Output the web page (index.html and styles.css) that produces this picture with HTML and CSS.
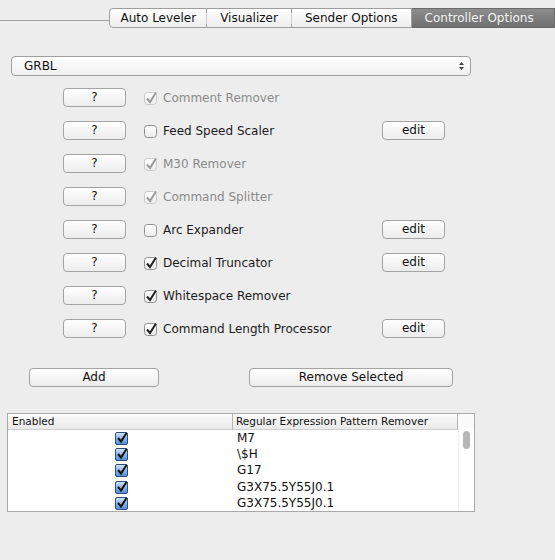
FILE: index.html
```html
<!DOCTYPE html>
<html>
<head>
<meta charset="utf-8">
<link rel="stylesheet" href="styles.css">
</head>
<body>
<svg class="defs" width="0" height="0" aria-hidden="true">
  <defs>
    <linearGradient id="blueFill" x1="0" y1="0" x2="0" y2="1">
      <stop offset="0" stop-color="#d6e6fb"/>
      <stop offset="0.5" stop-color="#8db6ea"/>
      <stop offset="1" stop-color="#4f89d6"/>
    </linearGradient>
    <linearGradient id="boxFill" x1="0" y1="0" x2="0" y2="1">
      <stop offset="0" stop-color="#ffffff"/>
      <stop offset="1" stop-color="#ececec"/>
    </linearGradient>
  </defs>
</svg>

<div class="tabs">
  <div class="tabline"></div>
  <div class="tab first">Auto Leveler</div>
  <div class="tab">Visualizer</div>
  <div class="tab">Sender Options</div>
  <div class="tab selected">Controller Options</div>
</div>

<div class="combo">
  <span>GRBL</span>
  <svg class="arrows" width="7" height="10" viewBox="0 0 7 10"><path d="M3.5 1 L6 4 L1 4 Z M3.5 9 L6 6 L1 6 Z" fill="#444"/></svg>
</div>

<div class="rows">
  <div class="row">
    <div class="btn q">?</div>
    <svg class="cb" width="14" height="14" viewBox="0 0 14 14"><rect x="0.5" y="1.5" width="12" height="12" rx="3" fill="url(#boxFill)" stroke="#c9c9c9"/><path d="M3 7.5 L6 11 L12 1.5" fill="none" stroke="#9a9a9a" stroke-width="2"/></svg>
    <span class="label disabled">Comment Remover</span>
  </div>
  <div class="row">
    <div class="btn q">?</div>
    <svg class="cb" width="14" height="14" viewBox="0 0 14 14"><rect x="0.5" y="1.5" width="12" height="12" rx="3" fill="url(#boxFill)" stroke="#8f8f8f"/></svg>
    <span class="label">Feed Speed Scaler</span>
    <div class="btn edit">edit</div>
  </div>
  <div class="row">
    <div class="btn q">?</div>
    <svg class="cb" width="14" height="14" viewBox="0 0 14 14"><rect x="0.5" y="1.5" width="12" height="12" rx="3" fill="url(#boxFill)" stroke="#c9c9c9"/><path d="M3 7.5 L6 11 L12 1.5" fill="none" stroke="#9a9a9a" stroke-width="2"/></svg>
    <span class="label disabled">M30 Remover</span>
  </div>
  <div class="row">
    <div class="btn q">?</div>
    <svg class="cb" width="14" height="14" viewBox="0 0 14 14"><rect x="0.5" y="1.5" width="12" height="12" rx="3" fill="url(#boxFill)" stroke="#c9c9c9"/><path d="M3 7.5 L6 11 L12 1.5" fill="none" stroke="#9a9a9a" stroke-width="2"/></svg>
    <span class="label disabled">Command Splitter</span>
  </div>
  <div class="row">
    <div class="btn q">?</div>
    <svg class="cb" width="14" height="14" viewBox="0 0 14 14"><rect x="0.5" y="1.5" width="12" height="12" rx="3" fill="url(#boxFill)" stroke="#8f8f8f"/></svg>
    <span class="label">Arc Expander</span>
    <div class="btn edit">edit</div>
  </div>
  <div class="row">
    <div class="btn q">?</div>
    <svg class="cb" width="14" height="14" viewBox="0 0 14 14"><rect x="0.5" y="1.5" width="12" height="12" rx="3" fill="url(#boxFill)" stroke="#8f8f8f"/><path d="M3 7.5 L6 11 L12 1.5" fill="none" stroke="#222" stroke-width="2"/></svg>
    <span class="label">Decimal Truncator</span>
    <div class="btn edit">edit</div>
  </div>
  <div class="row">
    <div class="btn q">?</div>
    <svg class="cb" width="14" height="14" viewBox="0 0 14 14"><rect x="0.5" y="1.5" width="12" height="12" rx="3" fill="url(#boxFill)" stroke="#8f8f8f"/><path d="M3 7.5 L6 11 L12 1.5" fill="none" stroke="#222" stroke-width="2"/></svg>
    <span class="label">Whitespace Remover</span>
  </div>
  <div class="row">
    <div class="btn q">?</div>
    <svg class="cb" width="14" height="14" viewBox="0 0 14 14"><rect x="0.5" y="1.5" width="12" height="12" rx="3" fill="url(#boxFill)" stroke="#8f8f8f"/><path d="M3 7.5 L6 11 L12 1.5" fill="none" stroke="#222" stroke-width="2"/></svg>
    <span class="label">Command Length Processor</span>
    <div class="btn edit">edit</div>
  </div>
</div>

<div class="actions">
  <div class="btn add">Add</div>
  <div class="btn remove">Remove Selected</div>
</div>

<div class="table">
  <div class="thead">
    <div class="th th1">Enabled</div>
    <div class="th th2">Regular Expression Pattern Remover</div>
    <div class="th th3"></div>
  </div>
  <div class="tbody">
    <div class="trows">
      <div class="tr"><div class="td c1"><svg width="14" height="14" viewBox="0 0 14 14"><rect x="0.5" y="1.5" width="12" height="12" rx="1.5" fill="url(#blueFill)" stroke="#2d4f80"/><path d="M3 7 L6 10.5 L11.5 2" fill="none" stroke="#111" stroke-width="2"/></svg></div><div class="td c2">M7</div></div>
      <div class="tr"><div class="td c1"><svg width="14" height="14" viewBox="0 0 14 14"><rect x="0.5" y="1.5" width="12" height="12" rx="1.5" fill="url(#blueFill)" stroke="#2d4f80"/><path d="M3 7 L6 10.5 L11.5 2" fill="none" stroke="#111" stroke-width="2"/></svg></div><div class="td c2">\$H</div></div>
      <div class="tr"><div class="td c1"><svg width="14" height="14" viewBox="0 0 14 14"><rect x="0.5" y="1.5" width="12" height="12" rx="1.5" fill="url(#blueFill)" stroke="#2d4f80"/><path d="M3 7 L6 10.5 L11.5 2" fill="none" stroke="#111" stroke-width="2"/></svg></div><div class="td c2">G17</div></div>
      <div class="tr"><div class="td c1"><svg width="14" height="14" viewBox="0 0 14 14"><rect x="0.5" y="1.5" width="12" height="12" rx="1.5" fill="url(#blueFill)" stroke="#2d4f80"/><path d="M3 7 L6 10.5 L11.5 2" fill="none" stroke="#111" stroke-width="2"/></svg></div><div class="td c2">G3X75.5Y55J0.1</div></div>
      <div class="tr"><div class="td c1"><svg width="14" height="14" viewBox="0 0 14 14"><rect x="0.5" y="1.5" width="12" height="12" rx="1.5" fill="url(#blueFill)" stroke="#2d4f80"/><path d="M3 7 L6 10.5 L11.5 2" fill="none" stroke="#111" stroke-width="2"/></svg></div><div class="td c2">G3X75.5Y55J0.1</div></div>
    </div>
    <div class="scroll"><div class="thumb"></div></div>
  </div>
</div>
</body>
</html>
```

FILE: styles.css
```css
* { box-sizing: border-box; }

html, body {
  margin: 0;
  padding: 0;
}

body {
  width: 555px;
  height: 560px;
  background: #ededed;
  font-family: "DejaVu Sans", "Liberation Sans", sans-serif;
  font-size: 12px;
  color: #1c1c1c;
  overflow: hidden;
}

.defs { position: absolute; }

/* Tabs */
.tabs {
  display: flex;
  padding-top: 8px;
  height: 28px;
}

.tabline {
  width: 110px;
  height: 1px;
  margin-top: 12px;
  background: #a4a4a4;
}

.tab {
  position: relative;
  height: 20px;
  line-height: 18px;
  padding: 0 13px;
  border: 1px solid #9e9e9e;
  border-left: none;
  background: linear-gradient(#ffffff, #eeeeee);
  color: #111;
  white-space: nowrap;
}

.tab::before {
  content: "";
  position: absolute;
  left: -1px;
  top: 4px;
  height: 11px;
  width: 1px;
  background: #cfcfcf;
}

.tab.first {
  border-left: 1px solid #9e9e9e;
  border-radius: 4px 0 0 4px;
  padding: 0 10px;
}

.tab.first::before { display: none; }

.tab.selected {
  background: linear-gradient(#8d8d8d, #6f6f6f);
  color: #f2f2f2;
  border-color: #6a6a6a;
  padding: 0 15px 0 13px;
  width: 144px;
}

.tab.selected::before { display: none; }

/* Combo */
.combo {
  margin: 28px 0 0 11px;
  width: 460px;
  height: 20px;
  border: 1px solid #a0a0a0;
  border-radius: 4px;
  background: linear-gradient(#ffffff, #f0f0f0);
  display: flex;
  align-items: center;
  justify-content: space-between;
  padding: 0 5px 0 12px;
  color: #111;
}

/* Filter rows */
.rows {
  margin-top: 5px;
  padding-left: 63px;
}

.row {
  height: 33px;
  display: flex;
  align-items: center;
}

.btn {
  height: 19px;
  border: 1px solid #a3a3a3;
  border-radius: 4px;
  background: linear-gradient(#ffffff, #ececec);
  text-align: center;
  line-height: 17px;
  color: #111;
}

.btn.q { width: 63px; }

.cb {
  margin-left: 18px;
  flex: none;
}

.label {
  margin-left: 5px;
  width: 219px;
  white-space: nowrap;
}

.label.disabled { color: #8a8a8a; }

.btn.edit { width: 63px; }

/* Add / Remove */
.actions {
  display: flex;
  margin-top: 23px;
  padding-left: 29px;
}

.btn.add { width: 130px; }

.btn.remove {
  width: 204px;
  margin-left: 90px;
}

/* Table */
.table {
  margin: 26px 0 0 7px;
  width: 468px;
  height: 99px;
  border: 1px solid #a9a9a9;
  background: #ffffff;
}

.thead {
  display: flex;
  height: 16px;
  font-size: 10.5px;
  color: #111;
}

.th {
  height: 16px;
  line-height: 15px;
  background: linear-gradient(#fbfbfb, #e9e9e9);
  border-bottom: 1px solid #cfcfcf;
  white-space: nowrap;
}

.th1 {
  width: 225px;
  padding-left: 4px;
  border-right: 1px solid #b5b5b5;
}

.th2 {
  width: 225px;
  padding-left: 3px;
  border-right: 1px solid #b5b5b5;
}

.th3 {
  flex: 1;
  background: #fbfbfb;
  border-bottom: none;
}

.tbody {
  display: flex;
  height: 81px;
}

.trows { width: 450px; }

.tr {
  display: flex;
  height: 16.2px;
}

.td {
  display: flex;
  align-items: center;
}

.c1 {
  width: 225px;
  justify-content: center;
  padding-left: 2px;
}

.c2 {
  width: 225px;
  padding-left: 4px;
  color: #111;
}

.scroll {
  flex: 1;
  display: flex;
  justify-content: center;
  padding-top: 1px;
  border-left: 1px solid #ececec;
}

.thumb {
  width: 7px;
  height: 18px;
  border-radius: 4px;
  background: #b7b7b7;
}
```
